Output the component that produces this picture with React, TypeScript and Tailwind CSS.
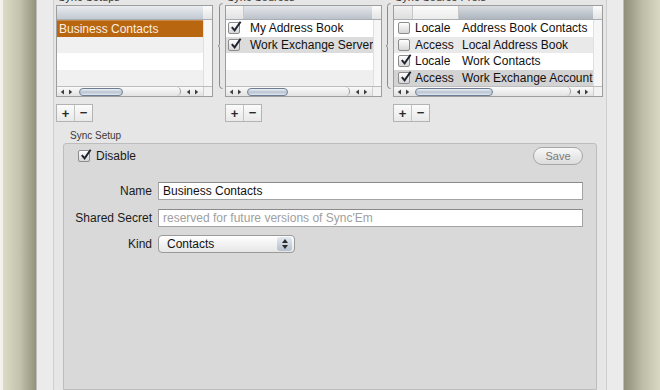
import React from 'react';

type Row = { bg: string; cells: React.ReactNode };

const Arrows = () => (
  <svg width="13" height="6" viewBox="0 0 13 6">
    <path d="M4 0.5 L0.8 3 L4 5.5Z" fill="#3c3c3c" />
    <path d="M9 0.5 L12.2 3 L9 5.5Z" fill="#3c3c3c" />
  </svg>
);

function Check({ on, size = 12 }: { on: boolean; size?: number }) {
  return (
    <div
      className="relative shrink-0 rounded-[2px] border border-[#8c8c8c] bg-gradient-to-b from-[#ffffff] to-[#d6d6d6]"
      style={{ width: size, height: size }}>
      {on && (
        <svg className="absolute -top-[2px] left-[1px]" width="12" height="12" viewBox="0 0 12 12">
          <path d="M1.8 6.2 L4.6 9.4 L10.6 0.8" fill="none" stroke="#1d2430" strokeWidth="2" />
        </svg>
      )}
    </div>
  );
}

function Scroller({ thumbLeft, thumbWidth }: { thumbLeft: number; thumbWidth: number }) {
  return (
    <div className="flex h-[10px] border-t border-[#bdbdbd] bg-gradient-to-b from-[#fafafa] to-[#e2e2e2]">
      <div className="flex w-[19px] items-center justify-center">
        <Arrows />
      </div>
      <div className="flex flex-1 items-center rounded-r-full border-r border-[#9a9a9a]">
        <div
          className="h-[8px] rounded-full border border-[#6e7e92] bg-gradient-to-b from-[#eef2f7] via-[#b9c4d1] to-[#dfe6ee]"
          style={{ marginLeft: thumbLeft, width: thumbWidth }}
        />
      </div>
      <div className="flex w-[22px] items-center justify-center">
        <Arrows />
      </div>
      <div className="w-[9px] border-l border-[#d0d0d0] bg-[#f2f2f2]" />
    </div>
  );
}

function ListBox({
  width,
  header,
  rows,
  thumbLeft,
  thumbWidth,
}: {
  width: number;
  header: React.ReactNode;
  rows: Row[];
  thumbLeft: number;
  thumbWidth: number;
}) {
  return (
    <div className="flex h-[92px] flex-col border border-[#9d9d9d] bg-white" style={{ width }}>
      <div className="flex h-[14px] border-b border-[#a9aeb5]">
        <div className="flex flex-1">{header}</div>
        <div className="w-[9px] bg-gradient-to-b from-[#fbfbfb] to-[#e4e4e4]" />
      </div>
      <div className="flex flex-1">
        <div className="flex flex-1 flex-col">
          {rows.map((r, i) => (
            <div key={i} className={`flex h-[16.5px] items-center ${r.bg}`}>
              {r.cells}
            </div>
          ))}
        </div>
        <div className="w-[9px] border-l border-[#e0e0e0] bg-[#f6f6f6]" />
      </div>
      <Scroller thumbLeft={thumbLeft} thumbWidth={thumbWidth} />
    </div>
  );
}

const PlusMinus = () => (
  <div className="mt-[7px] flex h-[18px] w-[37px] border border-[#b3b3b3] bg-gradient-to-b from-[#fbfbfb] to-[#e9e9e9] text-[13px] font-bold leading-none text-[#2a2a2a]">
    <div className="flex flex-1 items-center justify-center border-r border-[#c4c4c4]">+</div>
    <div className="flex flex-1 items-center justify-center pb-[1px]">−</div>
  </div>
);

const Brace = () => (
  <svg width="5" height="86" viewBox="0 0 5 86" className="mt-[3px] shrink-0">
    <path
      d="M4.5 0.5 Q1.5 0.5 1.5 3.5 L1.5 41 Q1.5 43 0 43 Q1.5 43 1.5 45 L1.5 82.5 Q1.5 85.5 4.5 85.5"
      fill="none"
      stroke="#8a8a8a"
      strokeWidth="1"
    />
  </svg>
);

const ColLabel = ({ text }: { text: string }) => (
  <div className="-mt-[9px] mb-[2px] h-[12px] pl-[2px] text-[11px] leading-[12px] text-[#333]">{text}</div>
);

export default function App() {
  const sourceRows: Row[] = [
    {
      bg: 'bg-white',
      cells: (
        <>
          <div className="ml-[2px] w-[20px]">
            <Check on />
          </div>
          <span className="pl-[2px]">My Address Book</span>
        </>
      ),
    },
    {
      bg: 'bg-[#dcdcdc]',
      cells: (
        <>
          <div className="ml-[2px] w-[20px]">
            <Check on />
          </div>
          <span className="whitespace-nowrap pl-[2px]">Work Exchange Server</span>
        </>
      ),
    },
    { bg: 'bg-white', cells: null },
    { bg: 'bg-[#efefef]', cells: null },
  ];

  const prefRow = (on: boolean, a: string, b: string, bg: string): Row => ({
    bg,
    cells: (
      <>
        <div className="flex w-[19px] justify-center">
          <Check on={on} />
        </div>
        <div className="w-[46px] pl-[2px]">{a}</div>
        <div className="whitespace-nowrap pl-[3px]">{b}</div>
      </>
    ),
  });

  const prefRows: Row[] = [
    prefRow(false, 'Locale', 'Address Book Contacts', 'bg-white'),
    prefRow(false, 'Access', 'Local Address Book', 'bg-[#e9e9e9]'),
    prefRow(true, 'Locale', 'Work Contacts', 'bg-white'),
    prefRow(true, 'Access', 'Work Exchange Account', 'bg-[#d3d3d3]'),
  ];

  const setupRows: Row[] = [
    {
      bg: 'bg-[#b8660f] text-[#fcefe0] border-t border-[#c98a45]',
      cells: <span className="pl-[2px]">Business Contacts</span>,
    },
    { bg: 'bg-[#f0f0f0]', cells: null },
    { bg: 'bg-white', cells: null },
    { bg: 'bg-[#f0f0f0]', cells: null },
  ];

  const fieldBase = 'h-[18px] flex-1 border border-[#a4a4a4] border-t-[#8a8a8a] bg-white px-[4px] text-[12px] leading-[16px]';

  return (
    <div className="flex h-[390px] w-[660px] overflow-hidden font-['Liberation_Sans',Arial,sans-serif] text-[12px] text-[#111]">
      <div className="flex w-[36px] shrink-0">
        <div className="w-[3px] bg-[#f3f2ea]" />
        <div className="flex-1 bg-gradient-to-r from-[#dcdbc6] via-[#c4c3ad] to-[#92927d]" />
      </div>

      <div className="flex flex-1 border-x border-[#bdbdbd] bg-[#ebebeb] px-[16px]">
        <div className="flex flex-1 flex-col border-x border-[#cfcfcf] bg-[#e6e6e6]">
          <div className="flex pl-[2px] pr-[3px]">
            <div className="flex flex-col">
              <ColLabel text="Sync Setups" />
              <ListBox
                width={157}
                header={<div className="flex-1 bg-gradient-to-b from-[#e9ecf0] to-[#c2c9d2]" />}
                rows={setupRows}
                thumbLeft={3}
                thumbWidth={44}
              />
              <PlusMinus />
            </div>
            <div className="ml-[5px] mr-[2px] flex">
              <Brace />
            </div>
            <div className="flex flex-col">
              <ColLabel text="Sync Sources" />
              <ListBox
                width={157}
                header={
                  <>
                    <div className="w-[18px] border-r border-[#c8c8c8] bg-gradient-to-b from-[#f7f7f7] to-[#e2e2e2]" />
                    <div className="flex-1 bg-gradient-to-b from-[#e4e7eb] to-[#bcc2ca]" />
                  </>
                }
                rows={sourceRows}
                thumbLeft={2}
                thumbWidth={41}
              />
              <PlusMinus />
            </div>
            <div className="ml-[4px] mr-[2px] flex">
              <Brace />
            </div>
            <div className="flex flex-1 flex-col">
              <ColLabel text="Sync Source Prefs" />
              <ListBox
                width={210}
                header={
                  <>
                    <div className="w-[19px] border-r border-[#c8c8c8] bg-gradient-to-b from-[#f2f2f2] to-[#dedede]" />
                    <div className="w-[46px] border-r border-[#c8c8c8] bg-gradient-to-b from-[#fbfbfb] to-[#ececec]" />
                    <div className="flex-1 bg-gradient-to-b from-[#d9dde2] to-[#aeb5be]" />
                  </>
                }
                rows={prefRows}
                thumbLeft={2}
                thumbWidth={78}
              />
              <PlusMinus />
            </div>
          </div>

          <div className="mt-[8px] pl-[16px] text-[10px] leading-[12px] text-[#3a3a3a]">Sync Setup</div>
          <div className="mx-[9px] mt-[1px] flex flex-1 flex-col rounded-t-[3px] border border-[#bdbdbd] bg-[#d9d9d9] pr-[13px] pt-[3px]">
            <div className="flex h-[18px] items-center">
              <div className="ml-[14px] flex items-center">
                <Check on />
                <span className="ml-[6px] text-[12px] text-[#1a1a1a]">Disable</span>
              </div>
              <div className="ml-auto flex h-[18px] w-[50px] items-center justify-center rounded-full border border-[#a6a6a6] bg-gradient-to-b from-[#f8f8f8] to-[#dcdcdc] text-[11px] text-[#7a7a7a]">
                Save
              </div>
            </div>

            <div className="mt-[17px] flex items-center pl-[8px]">
              <div className="w-[80px] text-right text-[#1a1a1a]">Name</div>
              <div className={`ml-[6px] ${fieldBase}`}>Business Contacts</div>
            </div>
            <div className="mt-[9px] flex items-center pl-[8px]">
              <div className="w-[80px] whitespace-nowrap text-right text-[#1a1a1a]">Shared Secret</div>
              <div className={`ml-[6px] text-[#a0a0a0] ${fieldBase}`}>reserved for future versions of Sync'Em</div>
            </div>
            <div className="mt-[8px] flex items-center pl-[8px]">
              <div className="w-[80px] text-right text-[#1a1a1a]">Kind</div>
              <div className="ml-[6px] flex h-[18px] w-[137px] items-center rounded-[4px] border border-[#9a9a9a] bg-gradient-to-b from-[#ffffff] to-[#e6e6e6]">
                <span className="flex-1 pl-[8px] text-[12px]">Contacts</span>
                <div className="mr-[2px] flex h-[14px] w-[15px] flex-col items-center justify-center gap-[2px] rounded-[3px] bg-gradient-to-b from-[#e4e9f0] to-[#b5c0cd]">
                  <svg width="6" height="4" viewBox="0 0 6 4">
                    <path d="M0 4 L3 0 L6 4Z" fill="#2a2a2a" />
                  </svg>
                  <svg width="6" height="4" viewBox="0 0 6 4">
                    <path d="M0 0 L3 4 L6 0Z" fill="#2a2a2a" />
                  </svg>
                </div>
              </div>
            </div>
          </div>
        </div>
      </div>

      <div className="flex w-[36px] shrink-0">
        <div className="flex-1 bg-gradient-to-r from-[#8e8e79] via-[#bdbca6] to-[#d9d8c2]" />
      </div>
    </div>
  );
}
